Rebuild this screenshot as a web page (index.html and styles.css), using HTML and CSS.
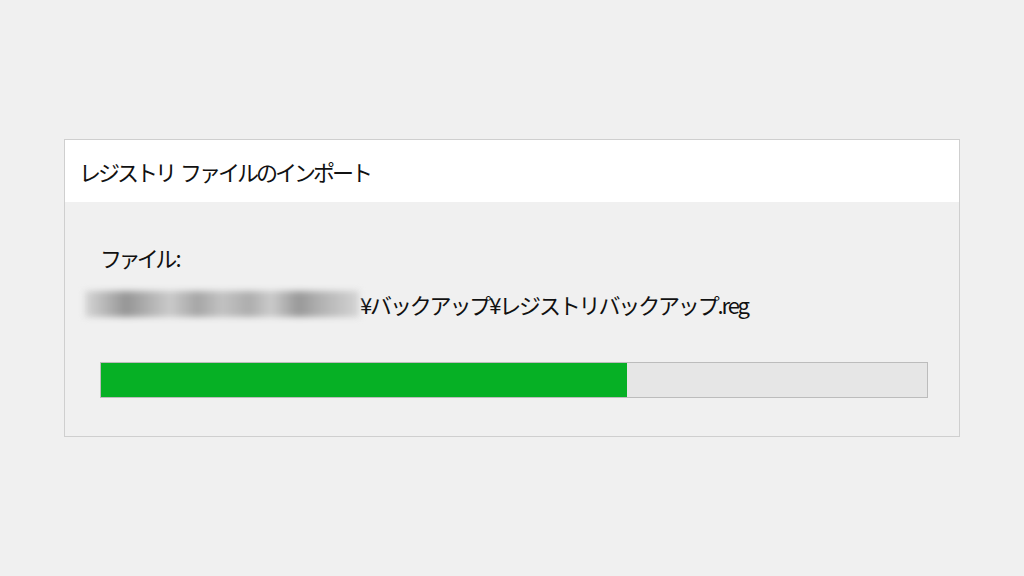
FILE: index.html
```html
<!DOCTYPE html>
<html lang="ja">
<head>
<meta charset="utf-8">
<link rel="stylesheet" href="styles.css">
</head>
<body>
<div class="dialog">
  <div class="titlebar">
    <span class="title">レジストリ ファイルのインポート</span>
  </div>
  <div class="content">
    <div class="label">ファイル<span class="colon">:</span></div>
    <div class="path">
      <span class="redacted"></span><span class="path-text">¥バックアップ¥レジストリバックアップ.reg</span>
    </div>
    <div class="progress">
      <div class="progress-fill" style="width: 63.7%"></div>
    </div>
  </div>
</div>
</body>
</html>
```
FILE: styles.css
```css
html, body {
  margin: 0;
  padding: 0;
  background: #f0f0f0;
  width: 1024px;
  height: 576px;
  overflow: hidden;
}
body {
  font-family: "Noto Sans CJK JP", "Noto Sans", sans-serif;
  color: #111;
}
.dialog {
  margin: 139px 0 0 64px;
  width: 894px;
  height: 296px;
  border: 1px solid #cfcfcf;
  background: #f0f0f0;
  display: flex;
  flex-direction: column;
}
.titlebar {
  height: 62px;
  background: #ffffff;
  display: flex;
  align-items: center;
  padding-left: 14px;
}
.title {
  font-size: 22px;
  letter-spacing: -3px;
  word-spacing: 4px;
  line-height: 1;
}
.content {
  padding: 40px 31px 0 35px;
  display: flex;
  flex-direction: column;
}
.label {
  font-size: 22px;
  letter-spacing: -3.6px;
  line-height: 30px;
}
.colon {
  letter-spacing: 0;
  margin-left: 2px;
}
.path {
  display: flex;
  align-items: center;
  margin-left: -15px;
  margin-top: 17px;
  height: 30px;
}
.redacted {
  width: 274px;
  height: 26px;
  background: linear-gradient(90deg, #d6d6d6 0%, #b4b4b4 8%, #959595 15%, #b0b0b0 23%, #cacaca 31%, #a6a6a6 41%, #c2c2c2 50%, #adadad 60%, #cbcbcb 68%, #989898 78%, #b2b2b2 86%, #d4d4d4 100%);
  filter: blur(3px);
  margin-right: 1px;
}
.path-text {
  font-size: 22px;
  letter-spacing: -2.15px;
  line-height: 30px;
}
.progress {
  margin-top: 43px;
  height: 34px;
  border: 1px solid #bcbcbc;
  background: #e6e6e6;
  display: flex;
}
.progress-fill {
  height: 100%;
  background: #06b025;
}
```
